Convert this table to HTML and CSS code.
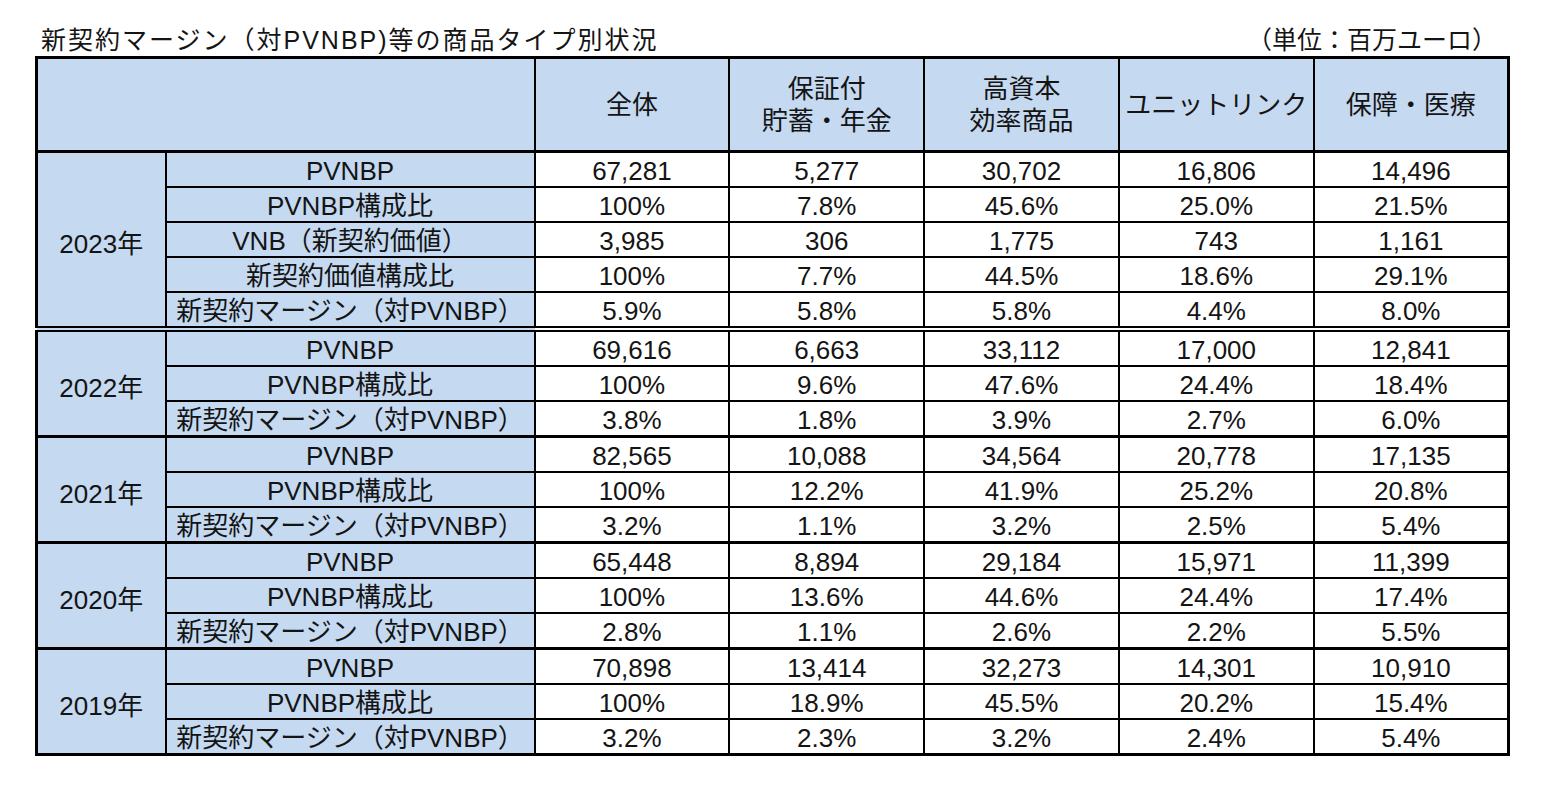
FILE: index.html
```html
<!DOCTYPE html>
<html lang="ja">
<head>
<meta charset="utf-8">
<link rel="stylesheet" href="styles.css">
</head>
<body>
<div class="page">
  <div class="caption">
    <div class="title">新契約マージン（対PVNBP)等の商品タイプ別状況</div>
    <div class="unit">（単位：百万ユーロ）</div>
  </div>
  <table class="tbl">
    <colgroup>
      <col class="c-year"><col class="c-label">
      <col class="c-data"><col class="c-data"><col class="c-data"><col class="c-data"><col class="c-data">
    </colgroup>
    <thead>
      <tr>
        <th colspan="2"></th>
        <th>全体</th>
        <th>保証付<br>貯蓄・年金</th>
        <th>高資本<br>効率商品</th>
        <th>ユニットリンク</th>
        <th>保障・医療</th>
      </tr>
    </thead>
    <tbody class="grp first">
      <tr><td class="year" rowspan="5">2023年</td><td class="label">PVNBP</td><td>67,281</td><td>5,277</td><td>30,702</td><td>16,806</td><td>14,496</td></tr>
      <tr><td class="label">PVNBP構成比</td><td>100%</td><td>7.8%</td><td>45.6%</td><td>25.0%</td><td>21.5%</td></tr>
      <tr><td class="label">VNB（新契約価値）</td><td>3,985</td><td>306</td><td>1,775</td><td>743</td><td>1,161</td></tr>
      <tr><td class="label">新契約価値構成比</td><td>100%</td><td>7.7%</td><td>44.5%</td><td>18.6%</td><td>29.1%</td></tr>
      <tr><td class="label">新契約マージン（対PVNBP）</td><td>5.9%</td><td>5.8%</td><td>5.8%</td><td>4.4%</td><td>8.0%</td></tr>
    </tbody>
    <tbody class="grp">
      <tr><td class="year" rowspan="3">2022年</td><td class="label">PVNBP</td><td>69,616</td><td>6,663</td><td>33,112</td><td>17,000</td><td>12,841</td></tr>
      <tr><td class="label">PVNBP構成比</td><td>100%</td><td>9.6%</td><td>47.6%</td><td>24.4%</td><td>18.4%</td></tr>
      <tr><td class="label">新契約マージン（対PVNBP）</td><td>3.8%</td><td>1.8%</td><td>3.9%</td><td>2.7%</td><td>6.0%</td></tr>
    </tbody>
    <tbody class="grp">
      <tr><td class="year" rowspan="3">2021年</td><td class="label">PVNBP</td><td>82,565</td><td>10,088</td><td>34,564</td><td>20,778</td><td>17,135</td></tr>
      <tr><td class="label">PVNBP構成比</td><td>100%</td><td>12.2%</td><td>41.9%</td><td>25.2%</td><td>20.8%</td></tr>
      <tr><td class="label">新契約マージン（対PVNBP）</td><td>3.2%</td><td>1.1%</td><td>3.2%</td><td>2.5%</td><td>5.4%</td></tr>
    </tbody>
    <tbody class="grp">
      <tr><td class="year" rowspan="3">2020年</td><td class="label">PVNBP</td><td>65,448</td><td>8,894</td><td>29,184</td><td>15,971</td><td>11,399</td></tr>
      <tr><td class="label">PVNBP構成比</td><td>100%</td><td>13.6%</td><td>44.6%</td><td>24.4%</td><td>17.4%</td></tr>
      <tr><td class="label">新契約マージン（対PVNBP）</td><td>2.8%</td><td>1.1%</td><td>2.6%</td><td>2.2%</td><td>5.5%</td></tr>
    </tbody>
    <tbody class="grp">
      <tr><td class="year" rowspan="3">2019年</td><td class="label">PVNBP</td><td>70,898</td><td>13,414</td><td>32,273</td><td>14,301</td><td>10,910</td></tr>
      <tr><td class="label">PVNBP構成比</td><td>100%</td><td>18.9%</td><td>45.5%</td><td>20.2%</td><td>15.4%</td></tr>
      <tr><td class="label">新契約マージン（対PVNBP）</td><td>3.2%</td><td>2.3%</td><td>3.2%</td><td>2.4%</td><td>5.4%</td></tr>
    </tbody>
  </table>
</div>
</body>
</html>
```
FILE: styles.css
```css
html, body {
  margin: 0;
  padding: 0;
  background: #ffffff;
}
body {
  font-family: "Liberation Sans", "Noto Sans CJK JP", sans-serif;
  color: #141414;
}
.page {
  padding: 24px 0 0 35px;
}
.caption {
  width: 1472px;
  display: flex;
  justify-content: space-between;
  align-items: flex-end;
  height: 32px;
  font-size: 25px;
  line-height: 32px;
}
.title {
  padding-left: 6px;
  letter-spacing: 2px;
}
.unit {
  padding-right: 10px;
}
.tbl {
  border-collapse: collapse;
  table-layout: fixed;
  width: 1472px;
  border: 3px solid #000;
  font-size: 26px;
}
.c-year { width: 129px; }
.c-label { width: 369px; }
.c-data { width: 194.8px; }
.tbl th, .tbl td {
  border: 2px solid #000;
  text-align: center;
  padding: 0;
  font-weight: normal;
}
.tbl th {
  background: #c5d9f1;
  height: 91px;
  line-height: 32px;
  vertical-align: middle;
}
.tbl td {
  height: 30px;
  line-height: 30px;
  padding-top: 3px;
  vertical-align: middle;
  background: #ffffff;
}
.tbl td.year, .tbl td.label {
  background: #c5d9f1;
}
.tbl td.year {
  padding-top: 8px;
}
.tbl tbody.grp {
  border-top: 3px solid #000;
}
.tbl tbody.first {
  border-bottom: 6px double #000;
}
```
